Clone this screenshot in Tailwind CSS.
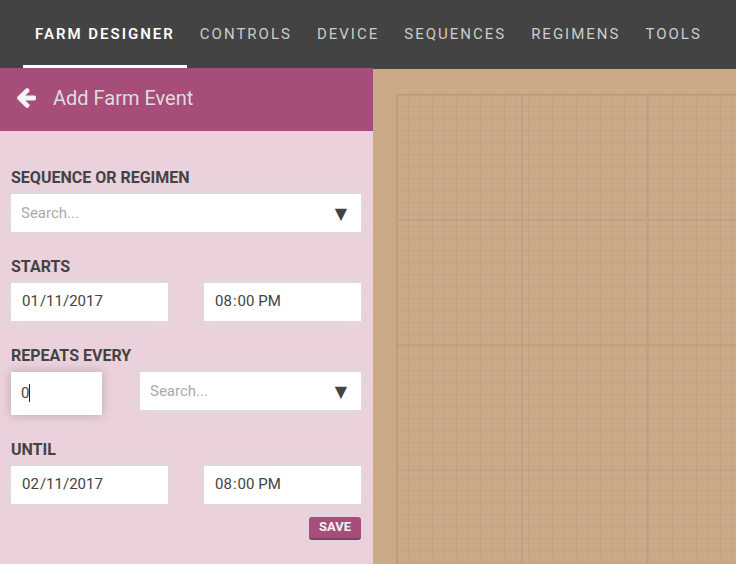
<!DOCTYPE html>
<html lang="en-US">
<head>
<meta charset="utf-8">
<meta name="viewport" content="width=device-width, initial-scale=1">
<title>Farm Designer</title>
<script src="https://cdn.jsdelivr.net/npm/@tailwindcss/browser@4"></script>
</head>
<body class="flex min-h-screen flex-col bg-[#ccaa88] font-['Roboto',sans-serif] text-[15px] leading-5 text-[#434343]">
  <nav class="flex h-[68px] shrink-0 gap-px bg-[#434343] pl-[23px] whitespace-nowrap tracking-[2px] text-[#cccccc]">
    <a href="#" aria-current="page" class="border-b-3 border-white px-3 pt-6 font-semibold text-white">FARM DESIGNER</a>
    <a href="#" class="px-3 pt-6">CONTROLS</a>
    <a href="#" class="px-3 pt-6">DEVICE</a>
    <a href="#" class="px-3 pt-6">SEQUENCES</a>
    <a href="#" class="px-3 pt-6">REGIMENS</a>
    <a href="#" class="px-3 pt-6">TOOLS</a>
  </nav>

  <div class="flex flex-1">
    <section class="w-[373px] shrink-0 bg-[#ead1dc]">
      <header class="flex h-[63px] items-center bg-[#a64d79] pb-1 pl-[17px]">
        <a href="#" aria-label="Back" class="mr-[17px]">
          <svg class="h-5 w-[19px]" viewBox="64 181 1472 1558" fill="#f4f4f4">
            <path d="M1536 896v128q0 53-32.500 90.500T1419 1152H715l293 294q38 36 38 90t-38 90l-75 76q-37 37-90 37-52 0-91-37L101 1050q-37-37-37-90 0-52 37-91l651-650q38-38 91-38 52 0 90 38l75 74q38 38 38 91t-38 91L715 768h704q52 0 84.500 37.500T1536 896z"/>
          </svg>
        </a>
        <h1 class="text-xl text-[#dddddd]">Add Farm Event</h1>
      </header>

      <form class="flex flex-col gap-[25px] pt-[37px] pr-3 pl-[11px]">
        <div>
          <label for="sequence" class="mb-[6px] block text-base/5 font-bold">SEQUENCE OR REGIMEN</label>
          <div class="flex h-[38px] items-center bg-white pr-[14px] pl-[10px] shadow-[0_0_10px_#dddddd]">
            <input id="sequence" type="text" placeholder="Search..." class="min-w-0 flex-1 outline-none placeholder:text-[#aaaaaa]">
            <button type="button" aria-label="Show sequences and regimens" class="pt-[2px] font-['DejaVu_Sans',sans-serif] text-base">▼</button>
          </div>
        </div>

        <fieldset class="min-w-0">
          <legend class="mb-[6px] text-base/5 font-bold">STARTS</legend>
          <div class="grid grid-cols-2 gap-9">
            <input type="date" aria-label="Start date" value="2017-01-11" class="h-[38px] w-full bg-white px-[10px] pb-[2px] shadow-[0_0_10px_#dddddd] outline-none [&::-webkit-calendar-picker-indicator]:hidden [&::-webkit-datetime-edit-day-field]:px-0 [&::-webkit-datetime-edit-year-field]:px-0">
            <input type="time" aria-label="Start time" value="20:00" class="h-[38px] w-full bg-white px-[10px] pb-[2px] shadow-[0_0_10px_#dddddd] outline-none [&::-webkit-calendar-picker-indicator]:hidden">
          </div>
        </fieldset>

        <fieldset class="min-w-0">
          <legend class="mb-[6px] text-base/5 font-bold">REPEATS EVERY</legend>
          <div class="flex items-start gap-[38px]">
            <div class="relative w-[91px]">
              <input type="text" inputmode="numeric" aria-label="Repeat interval" value="0" class="block h-[43px] w-full bg-white px-[10px] pb-[2px] shadow-[0_0_10px_rgba(0,0,0,0.2)] outline-none">
              <span aria-hidden="true" class="absolute top-3 left-[18px] h-[18px] w-px bg-[#222222]"></span>
            </div>
            <div class="flex h-[38px] min-w-0 flex-1 items-center bg-white pr-[14px] pl-[10px] shadow-[0_0_10px_#dddddd]">
              <input type="text" aria-label="Repeat unit" placeholder="Search..." class="min-w-0 flex-1 outline-none placeholder:text-[#aaaaaa]">
              <button type="button" aria-label="Show repeat units" class="pt-[2px] font-['DejaVu_Sans',sans-serif] text-base">▼</button>
            </div>
          </div>
        </fieldset>

        <fieldset class="min-w-0">
          <legend class="mb-[6px] text-base/5 font-bold">UNTIL</legend>
          <div class="grid grid-cols-2 gap-9">
            <input type="date" aria-label="End date" value="2017-02-11" class="h-[38px] w-full bg-white px-[10px] pb-[2px] shadow-[0_0_10px_#dddddd] outline-none [&::-webkit-calendar-picker-indicator]:hidden [&::-webkit-datetime-edit-day-field]:px-0 [&::-webkit-datetime-edit-year-field]:px-0">
            <input type="time" aria-label="End time" value="20:00" class="h-[38px] w-full bg-white px-[10px] pb-[2px] shadow-[0_0_10px_#dddddd] outline-none [&::-webkit-calendar-picker-indicator]:hidden">
          </div>
          <button type="submit" class="mt-[13px] ml-auto block h-[23px] rounded-[3px] border-b-2 border-[#853e61] bg-[#a64d79] px-[10px] pb-[2px] text-[13px] font-bold text-[#f4f4f4]">SAVE</button>
        </fieldset>
      </form>
    </section>

    <main aria-label="Farm map" class="flex min-w-0 flex-1 flex-col border-t border-[#434343] pt-[25px] pl-[23px]">
      <svg class="w-full flex-1" aria-hidden="true">
        <defs>
          <pattern id="minor" width="12" height="12" patternUnits="userSpaceOnUse">
            <path d="M0 .5h12M.5 0v12" stroke="#000" stroke-opacity=".04"/>
          </pattern>
          <pattern id="major" width="125" height="125" patternUnits="userSpaceOnUse">
            <path d="M0 1h125M1 0v125" stroke="#000" stroke-opacity=".05" stroke-width="2"/>
          </pattern>
        </defs>
        <rect width="100%" height="100%" fill="url(#minor)"/>
        <rect width="100%" height="100%" fill="url(#major)"/>
      </svg>
    </main>
  </div>
</body>
</html>
